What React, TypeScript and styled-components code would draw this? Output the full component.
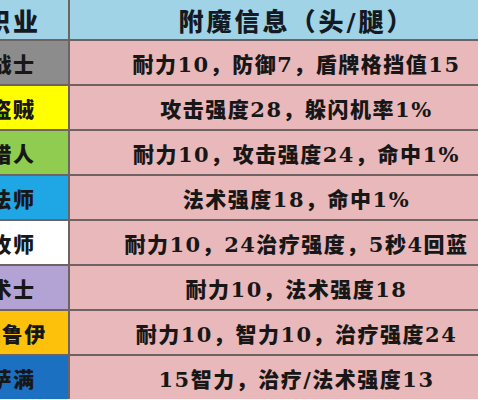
import { Fragment } from "react";
import styled, { createGlobalStyle } from "styled-components";

const GlobalStyle = createGlobalStyle`
  html, body {
    margin: 0;
    padding: 0;
    background: #ffffff;
  }
`;

const rows = [
  { job: "战士", bg: "#8c8c8c", info: "耐力10，防御7，盾牌格挡值15" },
  { job: "盗贼", bg: "#ffff00", info: "攻击强度28，躲闪机率1%" },
  { job: "猎人", bg: "#8fcc4f", info: "耐力10，攻击强度24，命中1%" },
  { job: "法师", bg: "#1fa6e4", info: "法术强度18，命中1%" },
  { job: "牧师", bg: "#ffffff", info: "耐力10，24治疗强度，5秒4回蓝" },
  { job: "术士", bg: "#b3a3d4", info: "耐力10，法术强度18" },
  { job: "德鲁伊", bg: "#fdc10c", info: "耐力10，智力10，治疗强度24" },
  { job: "萨满", bg: "#1b70c2", info: "15智力，治疗/法术强度13" },
];

// the shot is a crop of a wider table: both sides run past the frame
const Viewport = styled.div`
  width: 478px;
  height: 400px;
  overflow: hidden;
`;

const Table = styled.div`
  display: grid;
  grid-template-columns: 110px 453px;
  grid-template-rows: 39px;
  grid-auto-rows: 43px;
  gap: 2px;
  margin-left: -42px;
  width: 565px;
  background: #6e6262;
  font-family: "DejaVu Serif", "Noto Sans CJK SC", serif;
  font-weight: 900;
  color: #171717;
`;

const Cell = styled.div<{ $bg: string; $head?: boolean }>`
  display: flex;
  align-items: center;
  justify-content: center;
  background: ${(p) => p.$bg};
  font-size: ${(p) => (p.$head ? "25px" : "21px")};
  letter-spacing: ${(p) => (p.$head ? "3px" : "1.5px")};
  color: ${(p) => (p.$head ? "#141a24" : "#171717")};
  white-space: nowrap;
`;

export default function App() {
  return (
    <Viewport>
      <GlobalStyle />
      <Table>
        <Cell $bg="#9fd3e5" $head>
          职业
        </Cell>
        <Cell $bg="#9fd3e5" $head>
          附魔信息（头/腿）
        </Cell>
        {rows.map((r) => (
          <Fragment key={r.job}>
            <Cell $bg={r.bg}>{r.job}</Cell>
            <Cell $bg="#e8b8ba">{r.info}</Cell>
          </Fragment>
        ))}
      </Table>
    </Viewport>
  );
}
